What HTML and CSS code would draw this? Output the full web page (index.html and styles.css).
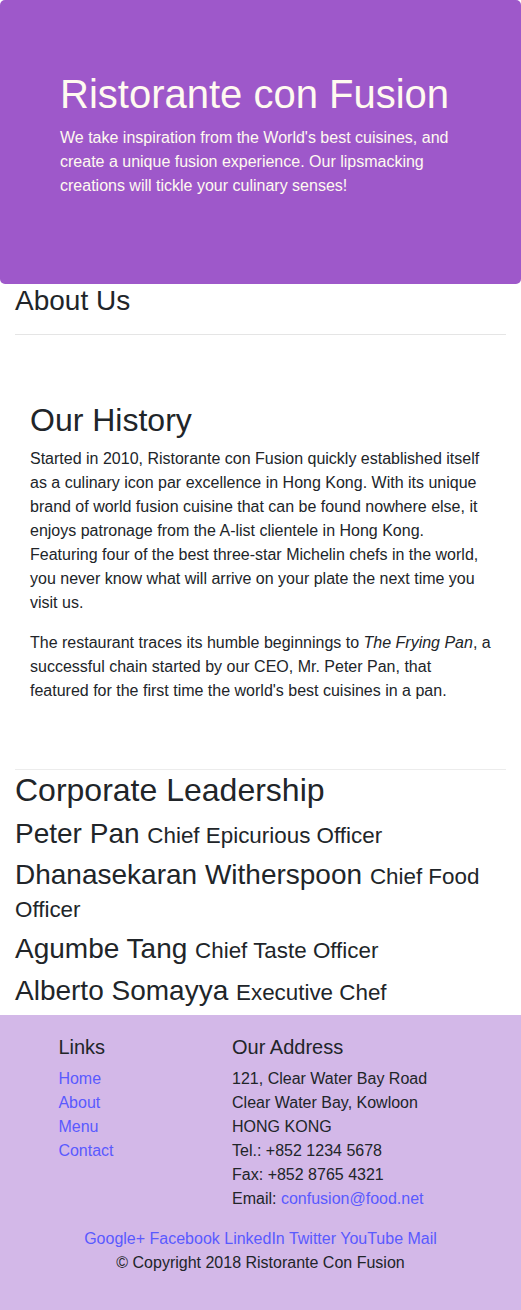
FILE: index.html
```html
<!DOCTYPE html>
<html lang="en">
<head>
<meta charset="utf-8">
<title>Ristorante con Fusion</title>
<link rel="stylesheet" href="styles.css">
</head>
<body>
<header class="jumbotron">
  <h1 class="brand-title">Ristorante con Fusion</h1>
  <p class="brand-lead">We take inspiration from the World's best cuisines, and create a unique fusion experience. Our lipsmacking creations will tickle your culinary senses!</p>
</header>

<main class="container">
  <h3 class="page-title">About Us</h3>
  <hr class="rule">

  <section class="row-content">
    <h2 class="heading">Our History</h2>
    <p class="text">Started in 2010, Ristorante con Fusion quickly established itself as a culinary icon par excellence in Hong Kong. With its unique brand of world fusion cuisine that can be found nowhere else, it enjoys patronage from the A-list clientele in Hong Kong. Featuring four of the best three-star Michelin chefs in the world, you never know what will arrive on your plate the next time you visit us.</p>
    <p class="text">The restaurant traces its humble beginnings to <em>The Frying Pan</em>, a successful chain started by our CEO, Mr. Peter Pan, that featured for the first time the world's best cuisines in a pan.</p>
  </section>

  <section class="leadership">
    <h2 class="heading heading-lead">Corporate Leadership</h2>
    <h3 class="leader">Peter Pan <small class="role">Chief Epicurious Officer</small></h3>
    <h3 class="leader">Dhanasekaran Witherspoon <small class="role">Chief Food Officer</small></h3>
    <h3 class="leader">Agumbe Tang <small class="role">Chief Taste Officer</small></h3>
    <h3 class="leader">Alberto Somayya <small class="role">Executive Chef</small></h3>
  </section>
</main>

<footer class="footer">
  <div class="footer-cols">
    <div class="col-links">
      <h5 class="footer-title">Links</h5>
      <ul class="plain-list">
        <li><a class="link" href="#">Home</a></li>
        <li><a class="link" href="#">About</a></li>
        <li><a class="link" href="#">Menu</a></li>
        <li><a class="link" href="#">Contact</a></li>
      </ul>
    </div>
    <div class="col-address">
      <h5 class="footer-title">Our Address</h5>
      <address class="address">
        121, Clear Water Bay Road<br>
        Clear Water Bay, Kowloon<br>
        HONG KONG<br>
        Tel.: +852 1234 5678<br>
        Fax: +852 8765 4321<br>
        Email: <a class="link" href="#">confusion@food.net</a>
      </address>
    </div>
  </div>
  <div class="social">
    <a class="link" href="#">Google+</a>
    <a class="link" href="#">Facebook</a>
    <a class="link" href="#">LinkedIn</a>
    <a class="link" href="#">Twitter</a>
    <a class="link" href="#">YouTube</a>
    <a class="link" href="#">Mail</a>
  </div>
  <p class="copyright">© Copyright 2018 Ristorante Con Fusion</p>
</footer>
</body>
</html>
```

FILE: styles.css
```css
* {
  box-sizing: border-box;
}

html, body {
  margin: 0;
  padding: 0;
}

body {
  font-family: "Liberation Sans", Arial, sans-serif;
  font-size: 16px;
  line-height: 1.5;
  color: #212529;
  background: #ffffff;
}

h1, h2, h3, h5 {
  font-weight: 500;
  line-height: 1.2;
  margin: 0 0 8px 0;
}

.jumbotron {
  background-color: #9e58ca;
  border-radius: 5px;
  padding: 70px 60px 70px 60px;
  color: floralwhite;
}

.brand-title {
  font-size: 40px;
  font-weight: 400;
  color: floralwhite;
}

.brand-lead {
  margin: 0;
  padding-bottom: 16px;
  color: floralwhite;
}

.container {
  padding: 0 15px;
}

.page-title {
  font-size: 28px;
  font-weight: 400;
}

.rule {
  border: 0;
  border-top: 1px solid rgba(0, 0, 0, 0.1);
  margin: 16px 0;
  height: 0;
}

.row-content {
  padding: 50px 15px;
  border-bottom: 1px solid #ececec;
}

.heading {
  font-size: 32px;
  font-weight: 400;
}

.heading-lead {
  padding-top: 1px;
}

.text {
  margin: 0 0 16px 0;
}

.leader {
  font-size: 28px;
  font-weight: 400;
  line-height: 1.18;
}

.role {
  font-size: 80%;
  font-weight: 400;
}

.footer {
  background-color: #d3b8e8;
  padding: 20px 0;
}

.footer-cols {
  display: grid;
  grid-template-columns: 8.3333% 33.3333% 58.3333%;
}

.col-links {
  grid-column: 2;
  padding: 0 15px;
}

.col-address {
  grid-column: 3;
  padding: 0 15px;
}

.footer-title {
  font-size: 20px;
  font-weight: 400;
}

.plain-list {
  list-style: none;
  margin: 0 0 16px 0;
  padding: 0;
}

.address {
  font-style: normal;
  margin: 0 0 16px 0;
}

.link {
  color: #5a5aff;
  text-decoration: none;
}

.social {
  text-align: center;
  padding: 0 15px;
}

.copyright {
  text-align: center;
  margin: 0 0 16px 0;
}
```
